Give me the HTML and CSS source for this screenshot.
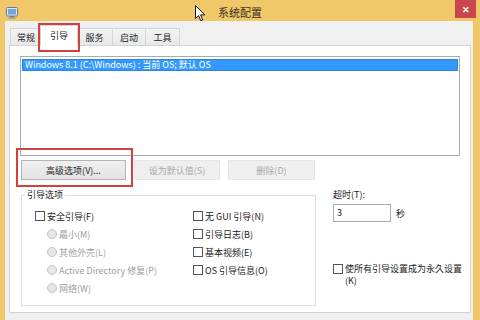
FILE: index.html
```html
<!DOCTYPE html>
<html lang="zh-CN">
<head>
    <meta charset="UTF-8">
    <title>系统配置</title>
    <link rel="stylesheet" href="styles.css">
</head>
<body>
    <div class="window">
        <div class="titlebar">
            <div class="tb-left">
                <svg class="app-icon" width="12" height="12" viewBox="0 0 12 12">
                    <rect x="0.5" y="0.5" width="11" height="8.5" rx="1" fill="#dfe6ee" stroke="#6d7a88"/>
                    <rect x="2" y="2" width="8" height="5.5" fill="#6fa6d8"/>
                    <rect x="4" y="9" width="4" height="1.5" fill="#6d7a88"/>
                    <rect x="2.5" y="10.5" width="7" height="1.2" fill="#8894a0"/>
                </svg>
            </div>
            <div class="title">系统配置</div>
            <div class="tb-right">
                <div class="close-btn">✕</div>
            </div>
            <svg class="cursor" width="11" height="17" viewBox="0 0 11 17">
                <path d="M0.5 0.5 L0.5 13.5 L3.6 10.6 L5.8 15.8 L7.7 15 L5.6 9.9 L9.8 9.9 Z" fill="#fff" stroke="#111" stroke-width="1" stroke-linejoin="round"/>
            </svg>
        </div>

        <div class="client">
            <div class="tabs">
                <div class="tab tab-w32">常规</div>
                <div class="tab tab-active">引导</div>
                <div class="tab tab-w37">服务</div>
                <div class="tab tab-w33">启动</div>
                <div class="tab tab-w34">工具</div>
            </div>

            <div class="panel">
                <div class="listbox">
                    <div class="list-row selected">Windows 8.1 (C:\Windows) : 当前 OS; 默认 OS</div>
                </div>

                <div class="button-row">
                    <button class="btn btn-adv">高级选项(V)...</button>
                    <button class="btn btn-default" disabled>设为默认值(S)</button>
                    <button class="btn btn-delete" disabled>删除(D)</button>
                </div>

                <div class="lower">
                    <fieldset class="group">
                        <legend>引导选项</legend>
                        <div class="group-cols">
                            <div class="col">
                                <div class="opt"><span class="check"></span>安全引导(F)</div>
                                <div class="opt sub disabled"><span class="radio"></span>最小(M)</div>
                                <div class="opt sub disabled"><span class="radio"></span>其他外壳(L)</div>
                                <div class="opt sub disabled"><span class="radio"></span>Active Directory 修复(P)</div>
                                <div class="opt sub disabled"><span class="radio"></span>网络(W)</div>
                            </div>
                            <div class="col col-right">
                                <div class="opt"><span class="check"></span>无 GUI 引导(N)</div>
                                <div class="opt"><span class="check"></span>引导日志(B)</div>
                                <div class="opt"><span class="check"></span>基本视频(E)</div>
                                <div class="opt"><span class="check"></span>OS 引导信息(O)</div>
                            </div>
                        </div>
                    </fieldset>

                    <div class="timeout">
                        <div class="label">超时(T):</div>
                        <div class="timeout-row">
                            <div class="input">3</div>
                            <span class="unit">秒</span>
                        </div>
                        <div class="permanent">
                            <span class="check"></span>
                            <span class="permanent-text"><span class="nowrap">使所有引导设置成为永久设置</span><br>(K)</span>
                        </div>
                    </div>
                </div>
            </div>
        </div>
    </div>
</body>
</html>
```

FILE: styles.css
```css
* {
    box-sizing: border-box;
}
body {
    margin: 0;
    width: 480px;
    height: 320px;
    overflow: hidden;
    background-color: #f0c86a;
    font-family: "Noto Sans CJK SC", "Noto Sans", sans-serif;
    font-size: 9px;
    color: #222222;
}
.window {
    display: flex;
    flex-direction: column;
    height: 320px;
}
.titlebar {
    position: relative;
    height: 21px;
    display: grid;
    grid-template-columns: 1fr auto 1fr;
    align-items: center;
}
.tb-left {
    display: flex;
    align-items: center;
    padding-left: 6px;
    padding-top: 4px;
}
.title {
    font-size: 11px;
    color: #3a3020;
    padding-top: 3px;
}
.tb-right {
    display: flex;
    justify-content: flex-end;
    align-self: start;
    padding-right: 4px;
}
.close-btn {
    width: 21px;
    height: 18px;
    background-color: #c9474b;
    color: #ffffff;
    font-size: 9px;
    font-weight: bold;
    display: flex;
    align-items: center;
    justify-content: center;
}
.cursor {
    position: absolute;
    left: 195px;
    top: 5px;
}
.client {
    flex: 1;
    margin: 0 7px 0 5px;
    background-color: #f0f0f0;
    padding: 4px 2px 0 4px;
}
.tabs {
    display: flex;
    align-items: flex-end;
    height: 20px;
    padding-left: 1px;
}
.tab {
    height: 17px;
    border: 1px solid #d4d4d4;
    border-bottom: none;
    background: linear-gradient(#f3f3f3, #e8e8e8);
    display: flex;
    align-items: center;
    justify-content: center;
    font-size: 9px;
    color: #222222;
    margin-left: -1px;
}
.tab:first-child {
    margin-left: 0;
}
.tab-w32 { width: 32px; }
.tab-w37 { width: 37px; }
.tab-w33 { width: 34px; }
.tab-w34 { width: 35px; }
.tab-active {
    position: relative;
    z-index: 2;
    width: 38px;
    height: 21px;
    margin: 0 -2px -1px -2px;
    background: #ffffff;
    padding-bottom: 2px;
}
.tab-active + .tab {
    margin-left: 0;
}
.tab-active::after {
    content: "";
    position: absolute;
    left: -3px;
    right: -3px;
    top: -3px;
    bottom: -6px;
    border: 2px solid #d0413f;
}
.panel {
    height: 268px;
    background-color: #ffffff;
    border: 1px solid #d4d4d4;
    padding: 10px 10px 0 10px;
}
.listbox {
    height: 100px;
    border: 1px solid #a9abb0;
    padding: 2px 1px;
}
.list-row {
    height: 12px;
    line-height: 12px;
    padding-left: 2px;
    white-space: nowrap;
}
.list-row.selected {
    background-color: #3399ff;
    border: 1px solid #2b86dc;
    line-height: 10px;
    color: #ffffff;
}
.button-row {
    display: flex;
    gap: 8px;
    margin-top: 4px;
    padding-left: 1px;
}
.btn {
    height: 20px;
    font-family: inherit;
    font-size: 9px;
    padding: 0;
    border: 1px solid #b4b4b4;
    background: linear-gradient(#f0f0f0, #e3e3e3);
    color: #222222;
}
.btn:disabled {
    border-color: #e6e6e6;
    background: #efefef;
    color: #a8a8a8;
}
.btn-adv {
    position: relative;
    width: 105px;
}
.btn-adv::after {
    content: "";
    position: absolute;
    left: -6px;
    right: -8px;
    top: -13px;
    bottom: -8px;
    border: 2px solid #d0413f;
}
.btn-default {
    width: 86px;
}
.btn-delete {
    width: 87px;
}
.lower {
    display: flex;
    margin-top: 9px;
    padding-left: 1px;
}
.group {
    width: 295px;
    height: 117px;
    flex-shrink: 0;
    margin: 0;
    padding: 0;
    border: 1px solid #dcdcdc;
}
.group legend {
    margin-left: 3px;
    padding: 0 2px;
    line-height: 12px;
    font-size: 9px;
}
.group-cols {
    display: grid;
    grid-template-columns: 158px 1fr;
    padding: 6px 0 0 13px;
}
.opt {
    display: flex;
    align-items: center;
    height: 18px;
    white-space: nowrap;
}
.opt.sub {
    padding-left: 12px;
}
.opt.disabled {
    color: #a0a0a0;
}
.check {
    width: 10px;
    height: 10px;
    border: 1px solid #555555;
    background: #ffffff;
    margin-right: 2px;
    flex-shrink: 0;
}
.radio {
    width: 10px;
    height: 10px;
    border: 1px solid #c4c4c4;
    border-radius: 50%;
    background: #e6e6e6;
    margin-right: 2px;
    flex-shrink: 0;
}
.timeout {
    margin-left: 17px;
    display: flex;
    flex-direction: column;
}
.label {
    line-height: 12px;
}
.timeout-row {
    display: flex;
    align-items: center;
    margin-top: 3px;
}
.input {
    width: 58px;
    height: 18px;
    border: 1px solid #a9abb0;
    padding: 2px 3px;
    line-height: 12px;
}
.unit {
    margin-left: 5px;
}
.permanent {
    display: flex;
    align-items: flex-start;
    margin-top: 41px;
}
.permanent .check {
    margin-top: 1px;
}
.permanent-text {
    line-height: 12px;
}
.nowrap {
    white-space: nowrap;
}
```
